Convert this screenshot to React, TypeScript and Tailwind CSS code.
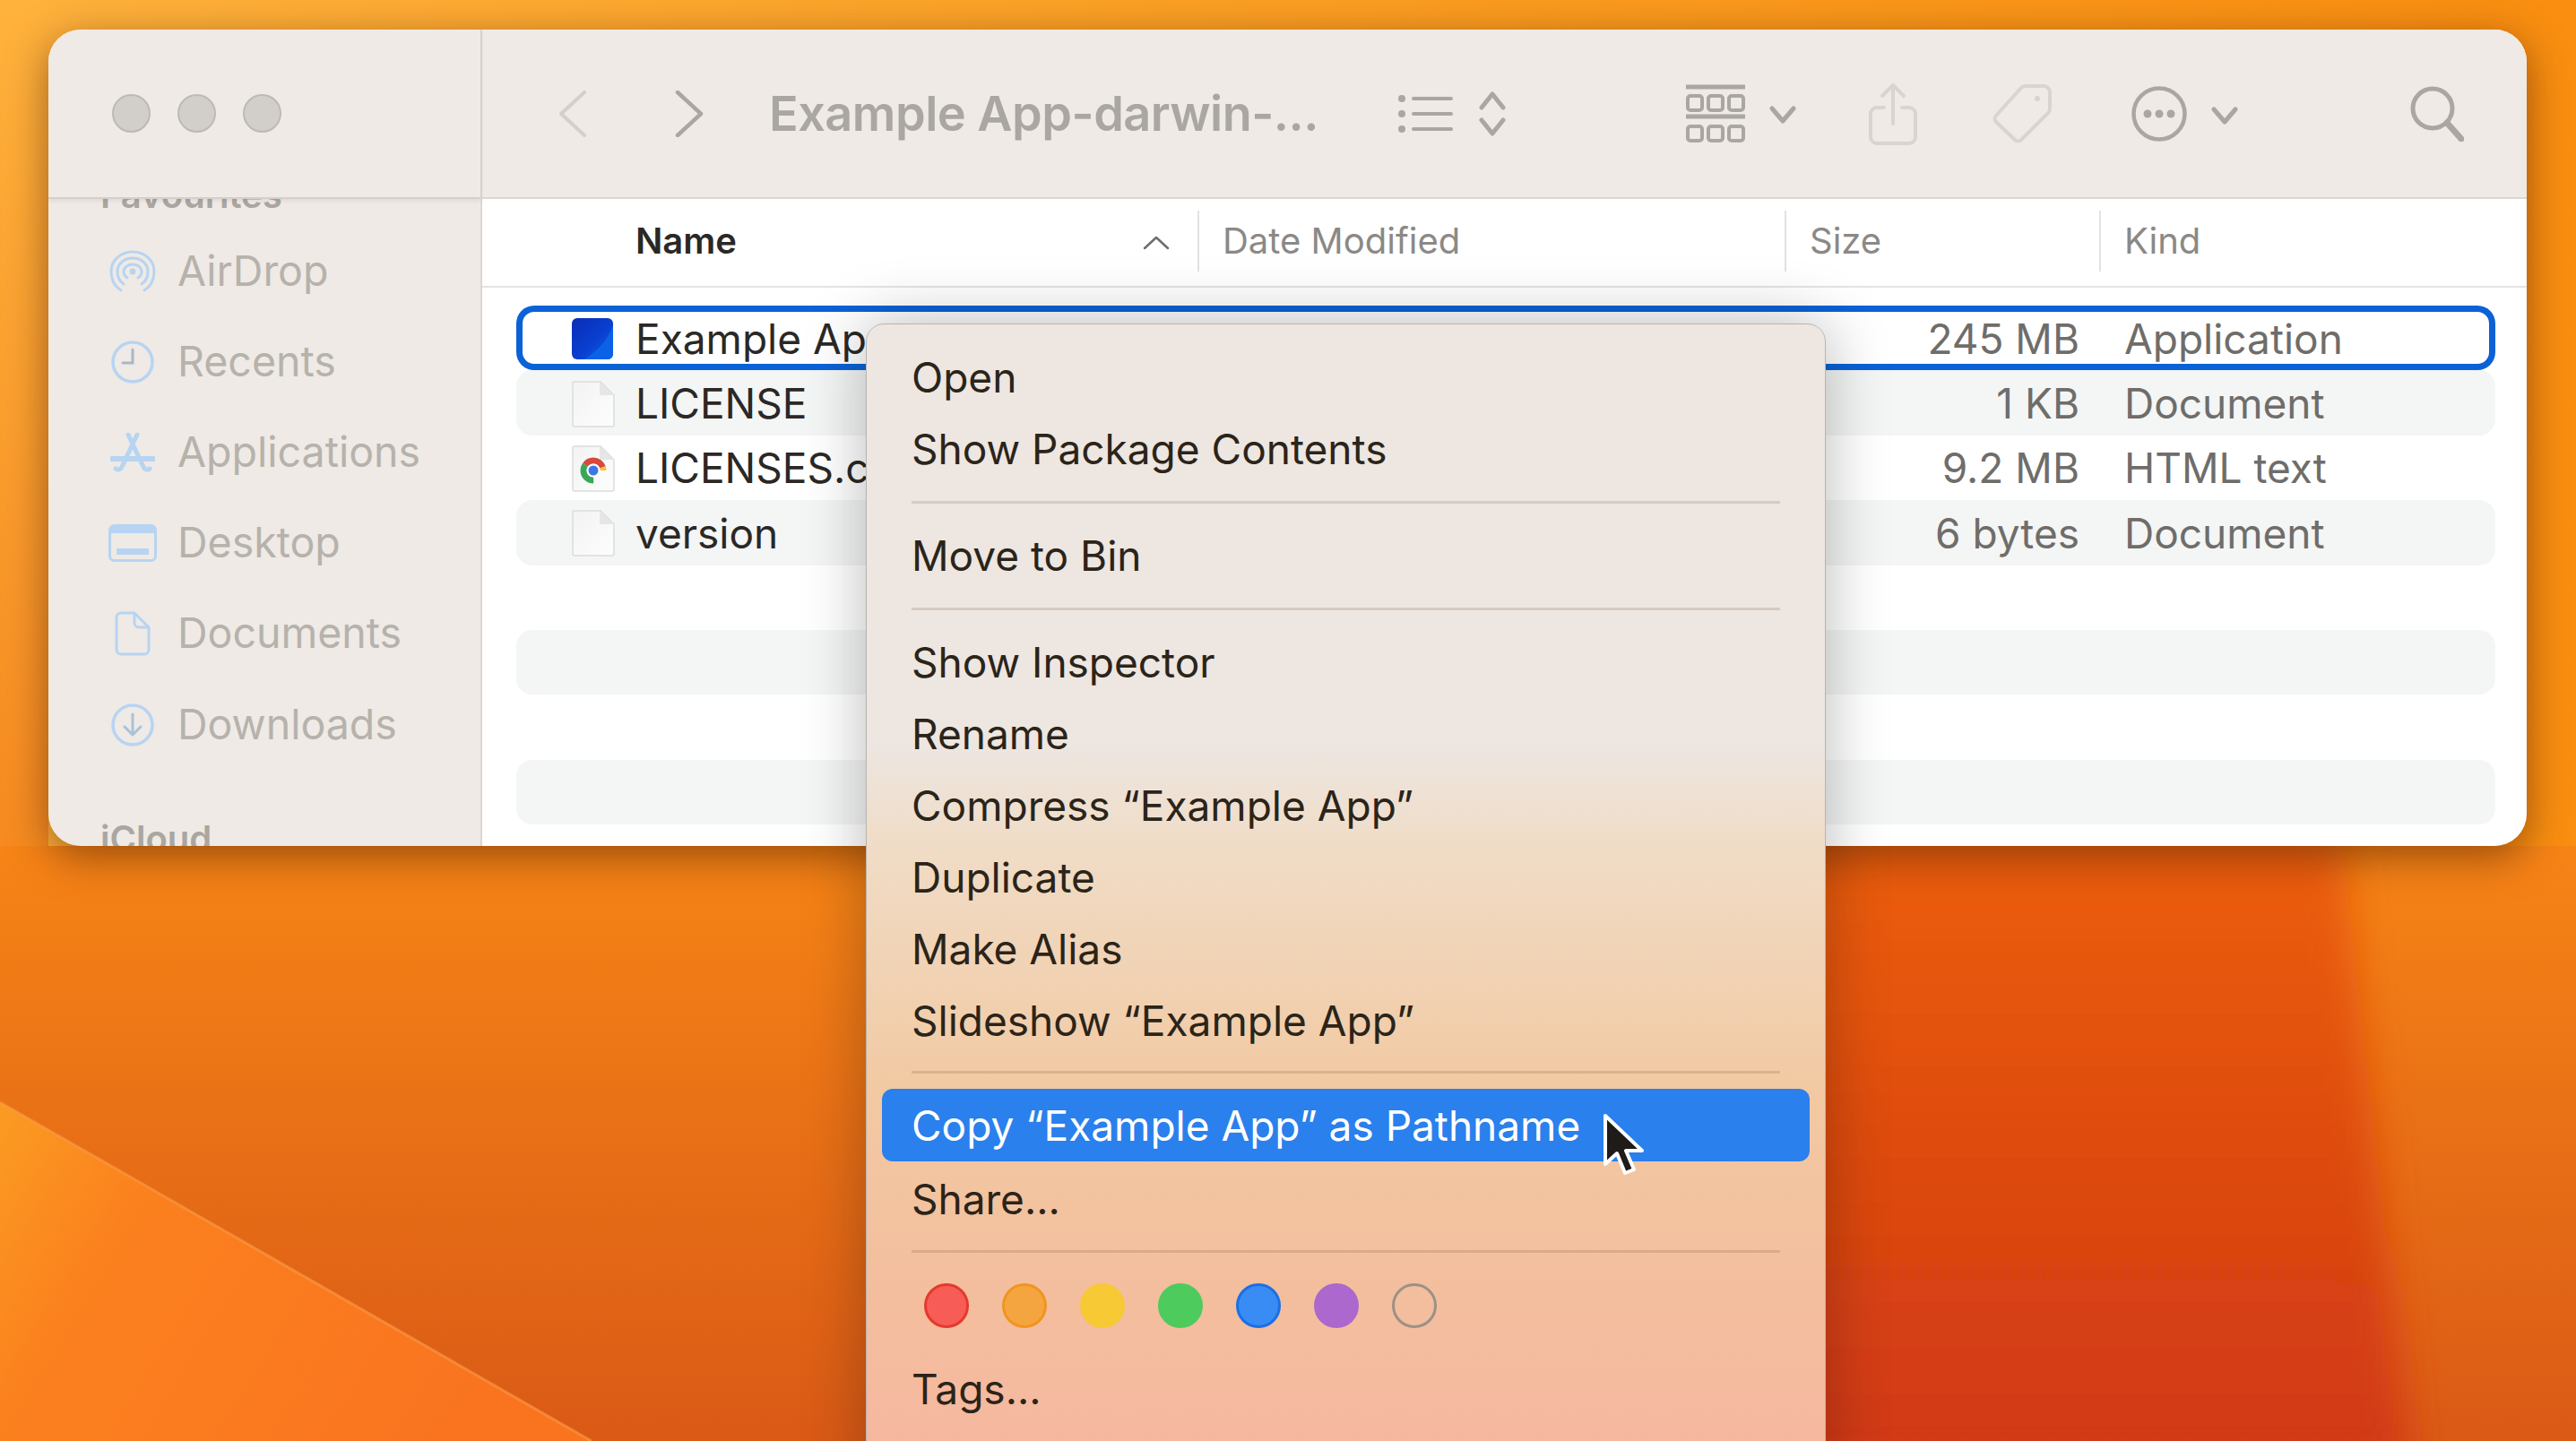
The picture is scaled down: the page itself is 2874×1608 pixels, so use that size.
import React from 'react'

const sidebarItems = [
  { label: 'AirDrop', icon: <AirDropIcon /> },
  { label: 'Recents', icon: <ClockIcon /> },
  { label: 'Applications', icon: <AppsIcon /> },
  { label: 'Desktop', icon: <DesktopIcon /> },
  { label: 'Documents', icon: <DocIcon /> },
  { label: 'Downloads', icon: <DownloadIcon /> },
]

const rows = [
  { name: 'Example App', date: 'Today at 11:33', size: '245 MB', kind: 'Application', icon: <AppIcon />, selected: true },
  { name: 'LICENSE', date: 'Today at 11:33', size: '1 KB', kind: 'Document', icon: <FileIcon /> },
  { name: 'LICENSES.chromium.html', date: 'Today at 11:33', size: '9.2 MB', kind: 'HTML text', icon: <ChromeFileIcon /> },
  { name: 'version', date: 'Today at 11:33', size: '6 bytes', kind: 'Document', icon: <FileIcon /> },
  {},
  {},
  {},
  {},
]

const tagColors = [
  'bg-[#f85c56] border-[#e33a2c]',
  'bg-[#f5a540] border-[#f0951f]',
  'bg-[#f7c935] border-[#f7c935]',
  'bg-[#4dcb5c] border-[#4dcb5c]',
  'bg-[#3a8cf5] border-[#1a70e6]',
  'bg-[#ac68cc] border-[#ac68cc]',
  'bg-transparent border-[#9c9186]',
]

function AirDropIcon() {
  return (
    <svg width="52" height="48" viewBox="0 0 52 48" fill="none" stroke="#b7d4f2" strokeWidth="3" strokeLinecap="round">
      <path d="M13 45C5 40 2 32 2 24 2 11 13 2 26 2s24 9 24 22c0 8-3 16-11 21" />
      <path d="M16 38C10 34 9 29 9 24 9 15 17 9 26 9s17 6 17 15c0 5-1 10-7 14" />
      <path d="M20 31c-3-2-4-4-4-7 0-5 5-8 10-8s10 3 10 8c0 3-1 5-4 7" />
      <circle cx="26" cy="24" r="3.5" fill="#b7d4f2" stroke="none" />
    </svg>
  )
}

function ClockIcon() {
  return (
    <svg width="48" height="48" viewBox="0 0 48 48" fill="none" stroke="#b7d4f2" strokeWidth="3.5" strokeLinecap="round">
      <circle cx="24" cy="24" r="22" />
      <path d="M24 10v15H13" stroke="#a9b8c4" strokeWidth="3" />
    </svg>
  )
}

function AppsIcon() {
  return (
    <svg width="50" height="44" viewBox="0 0 50 44" fill="none" stroke="#b7d4f2" strokeWidth="5" strokeLinecap="round">
      <path d="M20 2l17 36c1 3 5 4 7 2" />
      <path d="M30 2L13 38c-1 3-5 4-7 2" />
      <path d="M2 29h46" strokeWidth="6" />
    </svg>
  )
}

function DesktopIcon() {
  return (
    <svg width="54" height="42" viewBox="0 0 54 42" fill="none">
      <rect x="1.5" y="1.5" width="51" height="39" rx="5" stroke="#b7d4f2" strokeWidth="3" />
      <rect x="2" y="3" width="50" height="7" fill="#b7d4f2" />
      <rect x="9" y="27" width="36" height="7" rx="1" fill="#b7d4f2" />
    </svg>
  )
}

function DocIcon() {
  return (
    <svg width="40" height="50" viewBox="0 0 40 50" fill="none" stroke="#b7d4f2" strokeWidth="3" strokeLinejoin="round">
      <path d="M7 2h15l16 16v25a5 5 0 0 1-5 5H7a5 5 0 0 1-5-5V7a5 5 0 0 1 5-5z" />
      <path d="M22 2v11a5 5 0 0 0 5 5h11" />
    </svg>
  )
}

function DownloadIcon() {
  return (
    <svg width="48" height="48" viewBox="0 0 48 48" fill="none" stroke="#b7d4f2" strokeWidth="3.5" strokeLinecap="round" strokeLinejoin="round">
      <circle cx="24" cy="24" r="22" />
      <path d="M24 12v22M15 26l9 9 9-9" stroke="#a9c2d8" strokeWidth="3" />
    </svg>
  )
}

function FileIcon() {
  return (
    <svg width="48" height="52" viewBox="0 0 48 52">
      <defs>
        <linearGradient id="sheet" x1="0" y1="0" x2="1" y2="1">
          <stop offset="0" stopColor="#f3f3f3" />
          <stop offset="1" stopColor="#fdfdfd" />
        </linearGradient>
      </defs>
      <path d="M2 1h30l15 15v33a2 2 0 0 1-2 2H3a2 2 0 0 1-2-2V2z" fill="url(#sheet)" stroke="#dcdcdc" strokeWidth="1.5" />
      <path d="M31 1v15h16z" fill="#e6e6e6" />
    </svg>
  )
}

function AppIcon() {
  return (
    <svg width="46" height="46" viewBox="0 0 46 46">
      <defs>
        <linearGradient id="appBlue" x1="0" y1="0" x2="1" y2="1">
          <stop offset="0" stopColor="#0a2cb8" />
          <stop offset="0.55" stopColor="#0a3fd0" />
          <stop offset="1" stopColor="#0a62e8" />
        </linearGradient>
      </defs>
      <rect x="0" y="0" width="46" height="46" rx="6" fill="url(#appBlue)" />
      <path d="M46 8v32a6 6 0 0 1-6 6H14C30 36 40 24 46 8z" fill="#0c62e6" />
    </svg>
  )
}

function ChromeFileIcon() {
  return (
    <div className="relative">
      <FileIcon />
      <svg className="absolute left-[9px] top-[13px]" width="30" height="30" viewBox="0 0 30 30" fill="none">
        <circle cx="15" cy="15" r="11" stroke="#d9483b" strokeWidth="7" strokeDasharray="24 100" strokeDashoffset="-41" />
        <circle cx="15" cy="15" r="11" stroke="#f5c33b" strokeWidth="7" strokeDasharray="24 100" strokeDashoffset="-65" />
        <circle cx="15" cy="15" r="11" stroke="#3aa757" strokeWidth="7" strokeDasharray="24 100" strokeDashoffset="-17" />
        <circle cx="15" cy="15" r="7.5" fill="#ffffff" />
        <circle cx="15" cy="15" r="5.5" fill="#3b78e7" />
      </svg>
    </div>
  )
}

function Wallpaper() {
  return (
    <svg className="absolute inset-0" width="2874" height="1608" viewBox="0 0 2874 1608">
      <defs>
        <linearGradient id="top" x1="0" y1="0" x2="1" y2="0">
          <stop offset="0" stopColor="#ffb23c" />
          <stop offset="0.45" stopColor="#fba024" />
          <stop offset="1" stopColor="#f98e10" />
        </linearGradient>
        <linearGradient id="side" x1="0" y1="0" x2="0" y2="1">
          <stop offset="0" stopColor="#ffb23c" />
          <stop offset="1" stopColor="#f68a20" />
        </linearGradient>
        <linearGradient id="lower" x1="0" y1="0" x2="0" y2="1">
          <stop offset="0" stopColor="#f68416" />
          <stop offset="1" stopColor="#da5a16" />
        </linearGradient>
        <linearGradient id="red" x1="0" y1="0" x2="0" y2="1">
          <stop offset="0" stopColor="#ec5f0c" />
          <stop offset="1" stopColor="#d03714" />
        </linearGradient>
        <linearGradient id="wedge" x1="0" y1="0" x2="1" y2="0.35">
          <stop offset="0" stopColor="#fb9c22" />
          <stop offset="0.3" stopColor="#fb801e" />
          <stop offset="1" stopColor="#fa7420" />
        </linearGradient>
        <filter id="soft" x="-20%" y="-20%" width="140%" height="140%">
          <feGaussianBlur stdDeviation="22" />
        </filter>
      </defs>
      <rect width="2874" height="960" fill="url(#top)" />
      <rect width="54" height="960" fill="url(#side)" />
      <rect y="944" width="2874" height="664" fill="url(#lower)" />
      <polygon points="1900,930 2612,930 2690,1640 1900,1640" fill="url(#red)" filter="url(#soft)" />
      <polygon points="0,1230 660,1608 0,1608" fill="url(#wedge)" />
      <line x1="0" y1="1230" x2="660" y2="1608" stroke="#fb9c48" strokeWidth="3" opacity="0.6" />
    </svg>
  )
}

function Toolbar() {
  return (
    <div className="flex h-[189px] shrink-0 items-center border-b-2 border-[#dcd7d2] bg-[#efeae5] pl-[85px]">
      <svg width="32" height="52" viewBox="0 0 32 52" fill="none" stroke="#d3cfca" strokeWidth="4" strokeLinecap="round" strokeLinejoin="round">
        <path d="M29 2L3 26l26 24" />
      </svg>
      <svg className="ml-[98px]" width="32" height="52" viewBox="0 0 32 52" fill="none" stroke="#aaa6a1" strokeWidth="4.5" strokeLinecap="round" strokeLinejoin="round">
        <path d="M3 2l26 24L3 50" />
      </svg>
      <span className="ml-[73px] w-[610px] text-[54px] font-semibold leading-none tracking-[-0.5px] whitespace-nowrap text-[#aaa6a1]">Example App-darwin-...</span>
      <svg className="ml-[92px]" width="62" height="44" viewBox="0 0 62 44" fill="#aaa6a1">
        <circle cx="4" cy="5" r="4" />
        <circle cx="4" cy="22" r="4" />
        <circle cx="4" cy="39" r="4" />
        <rect x="15" y="3" width="46" height="4" rx="2" />
        <rect x="15" y="20" width="46" height="4" rx="2" />
        <rect x="15" y="37" width="46" height="4" rx="2" />
      </svg>
      <svg className="ml-[28px]" width="30" height="50" viewBox="0 0 30 50" fill="none" stroke="#aaa6a1" strokeWidth="5" strokeLinecap="round" strokeLinejoin="round">
        <path d="M3 18L15 3l12 15M3 32l12 15 12-15" />
      </svg>
      <svg className="ml-[201px]" width="66" height="66" viewBox="0 0 66 66" fill="none" stroke="#aaa6a1" strokeWidth="4">
        <path d="M1 3h64M1 36h64" strokeWidth="5" strokeLinecap="round" />
        <rect x="2" y="13" width="16" height="16" rx="3" />
        <rect x="25" y="13" width="16" height="16" rx="3" />
        <rect x="48" y="13" width="16" height="16" rx="3" />
        <rect x="2" y="47" width="16" height="16" rx="3" />
        <rect x="25" y="47" width="16" height="16" rx="3" />
        <rect x="48" y="47" width="16" height="16" rx="3" />
      </svg>
      <svg className="ml-[27px] mt-[2px]" width="30" height="20" viewBox="0 0 30 20" fill="none" stroke="#aaa6a1" strokeWidth="5" strokeLinecap="round" strokeLinejoin="round">
        <path d="M3 3l12 14L27 3" />
      </svg>
      <svg className="ml-[81px]" width="54" height="70" viewBox="0 0 54 70" fill="none" stroke="#d8d4cf" strokeWidth="4" strokeLinecap="round" strokeLinejoin="round">
        <path d="M17 28H9a7 7 0 0 0-7 7v26a7 7 0 0 0 7 7h36a7 7 0 0 0 7-7V35a7 7 0 0 0-7-7h-8" />
        <path d="M27 46V3M15 15L27 3l12 12" />
      </svg>
      <svg className="ml-[83px]" width="68" height="68" viewBox="0 0 68 68" fill="none" stroke="#d8d4cf" strokeWidth="4" strokeLinejoin="round">
        <path d="M38 3h20a7 7 0 0 1 7 7v18a7 7 0 0 1-2 5L33 63a5 5 0 0 1-7 0L5 43a5 5 0 0 1 0-7L33 5a7 7 0 0 1 5-2z" />
        <circle cx="51" cy="17" r="3" fill="#d8d4cf" stroke="none" />
      </svg>
      <svg className="ml-[88px]" width="62" height="62" viewBox="0 0 62 62" fill="none">
        <circle cx="31" cy="31" r="28.5" stroke="#aaa6a1" strokeWidth="4.5" />
        <circle cx="18" cy="31" r="4.5" fill="#aaa6a1" />
        <circle cx="31" cy="31" r="4.5" fill="#aaa6a1" />
        <circle cx="44" cy="31" r="4.5" fill="#aaa6a1" />
      </svg>
      <svg className="ml-[27px] mt-[4px]" width="30" height="20" viewBox="0 0 30 20" fill="none" stroke="#aaa6a1" strokeWidth="5" strokeLinecap="round" strokeLinejoin="round">
        <path d="M3 3l12 14L27 3" />
      </svg>
      <svg className="ml-[192px]" width="60" height="62" viewBox="0 0 60 62" fill="none" stroke="#aaa6a1" strokeLinecap="round">
        <circle cx="25" cy="25" r="22" strokeWidth="5" />
        <path d="M41 41l16 18" strokeWidth="7" />
      </svg>
    </div>
  )
}

function FinderWindow() {
  return (
    <div className="flex h-[911px] w-[2765px] overflow-hidden rounded-[36px] shadow-[0_12px_45px_rgba(60,20,0,0.5)]">
      <div className="flex w-[484px] shrink-0 flex-col border-r-2 border-[#dcd7d2] bg-[#efeae5]">
        <div className="relative z-10 flex h-[189px] shrink-0 items-center gap-[30px] border-b-2 border-[#d5d0cb] bg-[#efeae5] pl-[71px] shadow-[0_2px_5px_rgba(0,0,0,0.08)]">
          <div className="h-[43px] w-[43px] rounded-full border-2 border-[#bdb9b5] bg-[#d2cfcb]" />
          <div className="h-[43px] w-[43px] rounded-full border-2 border-[#bdb9b5] bg-[#d2cfcb]" />
          <div className="h-[43px] w-[43px] rounded-full border-2 border-[#bdb9b5] bg-[#d2cfcb]" />
        </div>
        <div className="flex-1 overflow-hidden">
          <div className="mt-[-26px] h-[44px] pl-[58px] text-[40px] font-semibold leading-[44px] text-[#aaa6a1]">Favourites</div>
          <div className="mt-[12px]">
            {sidebarItems.map((item) => (
              <div key={item.label} className="flex h-[101.2px] items-center">
                <div className="flex w-[144px] shrink-0 justify-center pl-[44px]">{item.icon}</div>
                <span className="text-[46.5px] text-[#b6b2ac]">{item.label}</span>
              </div>
            ))}
          </div>
          <div className="mt-[55px] h-[44px] pl-[58px] text-[40px] font-semibold leading-[44px] text-[#aaa6a1]">iCloud</div>
        </div>
      </div>

      <div className="flex min-w-0 flex-1 flex-col bg-white">
        <Toolbar />
        <div className="flex h-[99px] shrink-0 items-center border-b-2 border-[#e4e4e4] pb-[3px] pl-[171px] text-[40px] text-[#8b8986]">
          <div className="flex w-[627px] shrink-0 items-center justify-between pr-[31px]">
            <span className="font-semibold text-[#2b2825]">Name</span>
            <svg className="mt-[4px]" width="30" height="16" viewBox="0 0 30 16" fill="none" stroke="#6f6d6a" strokeWidth="2.5" strokeLinecap="round" strokeLinejoin="round">
              <path d="M2 14L15 2l13 12" />
            </svg>
          </div>
          <div className="flex h-[68px] w-[655px] shrink-0 items-center border-l-2 border-[#e2e2e2] pl-[26px]">Date Modified</div>
          <div className="flex h-[68px] w-[351px] shrink-0 items-center border-l-2 border-[#e2e2e2] pl-[26px]">Size</div>
          <div className="flex h-[68px] flex-1 items-center border-l-2 border-[#e2e2e2] pl-[26px]">Kind</div>
        </div>

        <div className="pl-[38px] pr-[35px] pt-[20px]">
          {rows.map((row, i) => (
            <div
              key={i}
              className={
                row.selected
                  ? 'flex h-[72.4px] items-center rounded-[20px] bg-white pt-[2px] text-[46px] ring-[7px] ring-inset ring-[#0a62d6]'
                  : i % 2 === 1
                    ? 'flex h-[72.4px] items-center rounded-[18px] bg-[#f4f5f5] pt-[2px] text-[46px]'
                    : 'flex h-[72.4px] items-center pt-[2px] text-[46px]'
              }
            >
              {row.name && (
                <>
                  <div className="flex w-[133px] shrink-0 pl-[62px]">{row.icon}</div>
                  <div className="w-[655px] shrink-0 whitespace-nowrap text-[#2b2825]">{row.name}</div>
                  <div className="w-[620px] shrink-0 whitespace-nowrap text-[#6f6d6a]">{row.date}</div>
                  <div className="w-[336px] shrink-0 text-right text-[#6f6d6a]">{row.size}</div>
                  <div className="ml-[50px] text-[#6f6d6a]">{row.kind}</div>
                </>
              )}
            </div>
          ))}
        </div>
      </div>
    </div>
  )
}

function MenuItem({ label }: { label: string }) {
  return <div className="flex h-[80px] items-center pl-[50px] whitespace-nowrap">{label}</div>
}

function Separator({ height }: { height: string }) {
  return (
    <div className={`flex items-center px-[50px] ${height}`}>
      <div className="h-[3px] w-full bg-[#5a3010]/15" />
    </div>
  )
}

function ContextMenu() {
  return (
    <div className="absolute left-[966px] top-[361px] h-[1300px] w-[1071px] rounded-[20px] border border-[#b9b4af] bg-[linear-gradient(to_bottom,#ede6e1_0%,#ede6e1_36%,#f0dcc6_45%,#f2c9a2_66%,#f3bf9e_82%,#f6b69f_100%)] pt-[19px] text-[46px] text-[#2b2419] shadow-[0_0_70px_rgba(0,0,0,0.28)]">
      <MenuItem label="Open" />
      <MenuItem label="Show Package Contents" />
      <Separator height="h-[39px]" />
      <MenuItem label="Move to Bin" />
      <Separator height="h-[39px]" />
      <MenuItem label="Show Inspector" />
      <MenuItem label="Rename" />
      <MenuItem label="Compress “Example App”" />
      <MenuItem label="Duplicate" />
      <MenuItem label="Make Alias" />
      <MenuItem label="Slideshow “Example App”" />
      <Separator height="h-[35px]" />
      <div className="mx-[17px] mt-[1px] flex h-[81px] items-center rounded-[12px] bg-[#2a80ec] pl-[33px] pt-[2px] whitespace-nowrap text-white">
        Copy “Example App” as Pathname
      </div>
      <div className="mt-[2px]">
        <MenuItem label="Share..." />
      </div>
      <Separator height="h-[37px]" />
      <div className="flex h-[84px] items-center gap-[37px] pl-[64px]">
        {tagColors.map((c) => (
          <div key={c} className={`h-[50px] w-[50px] rounded-full border-[3px] ${c}`} />
        ))}
      </div>
      <div className="mt-[11px]">
        <MenuItem label="Tags..." />
      </div>
    </div>
  )
}

function Cursor() {
  return (
    <svg className="absolute left-[1786px] top-[1241px]" width="50" height="76" viewBox="0 0 50 76">
      <path
        d="M5 4v54l13-12 9 22 10-4-9-21h18z"
        fill="#1f1b18"
        stroke="#ffffff"
        strokeWidth="4"
        strokeLinejoin="round"
      />
    </svg>
  )
}

export default function App() {
  return (
    <div className="relative h-[1608px] w-[2874px] overflow-hidden pl-[54px] pt-[33px] font-['Inter','Noto_Sans',sans-serif]">
      <Wallpaper />
      <div className="relative">
        <FinderWindow />
      </div>
      <ContextMenu />
      <Cursor />
    </div>
  )
}
